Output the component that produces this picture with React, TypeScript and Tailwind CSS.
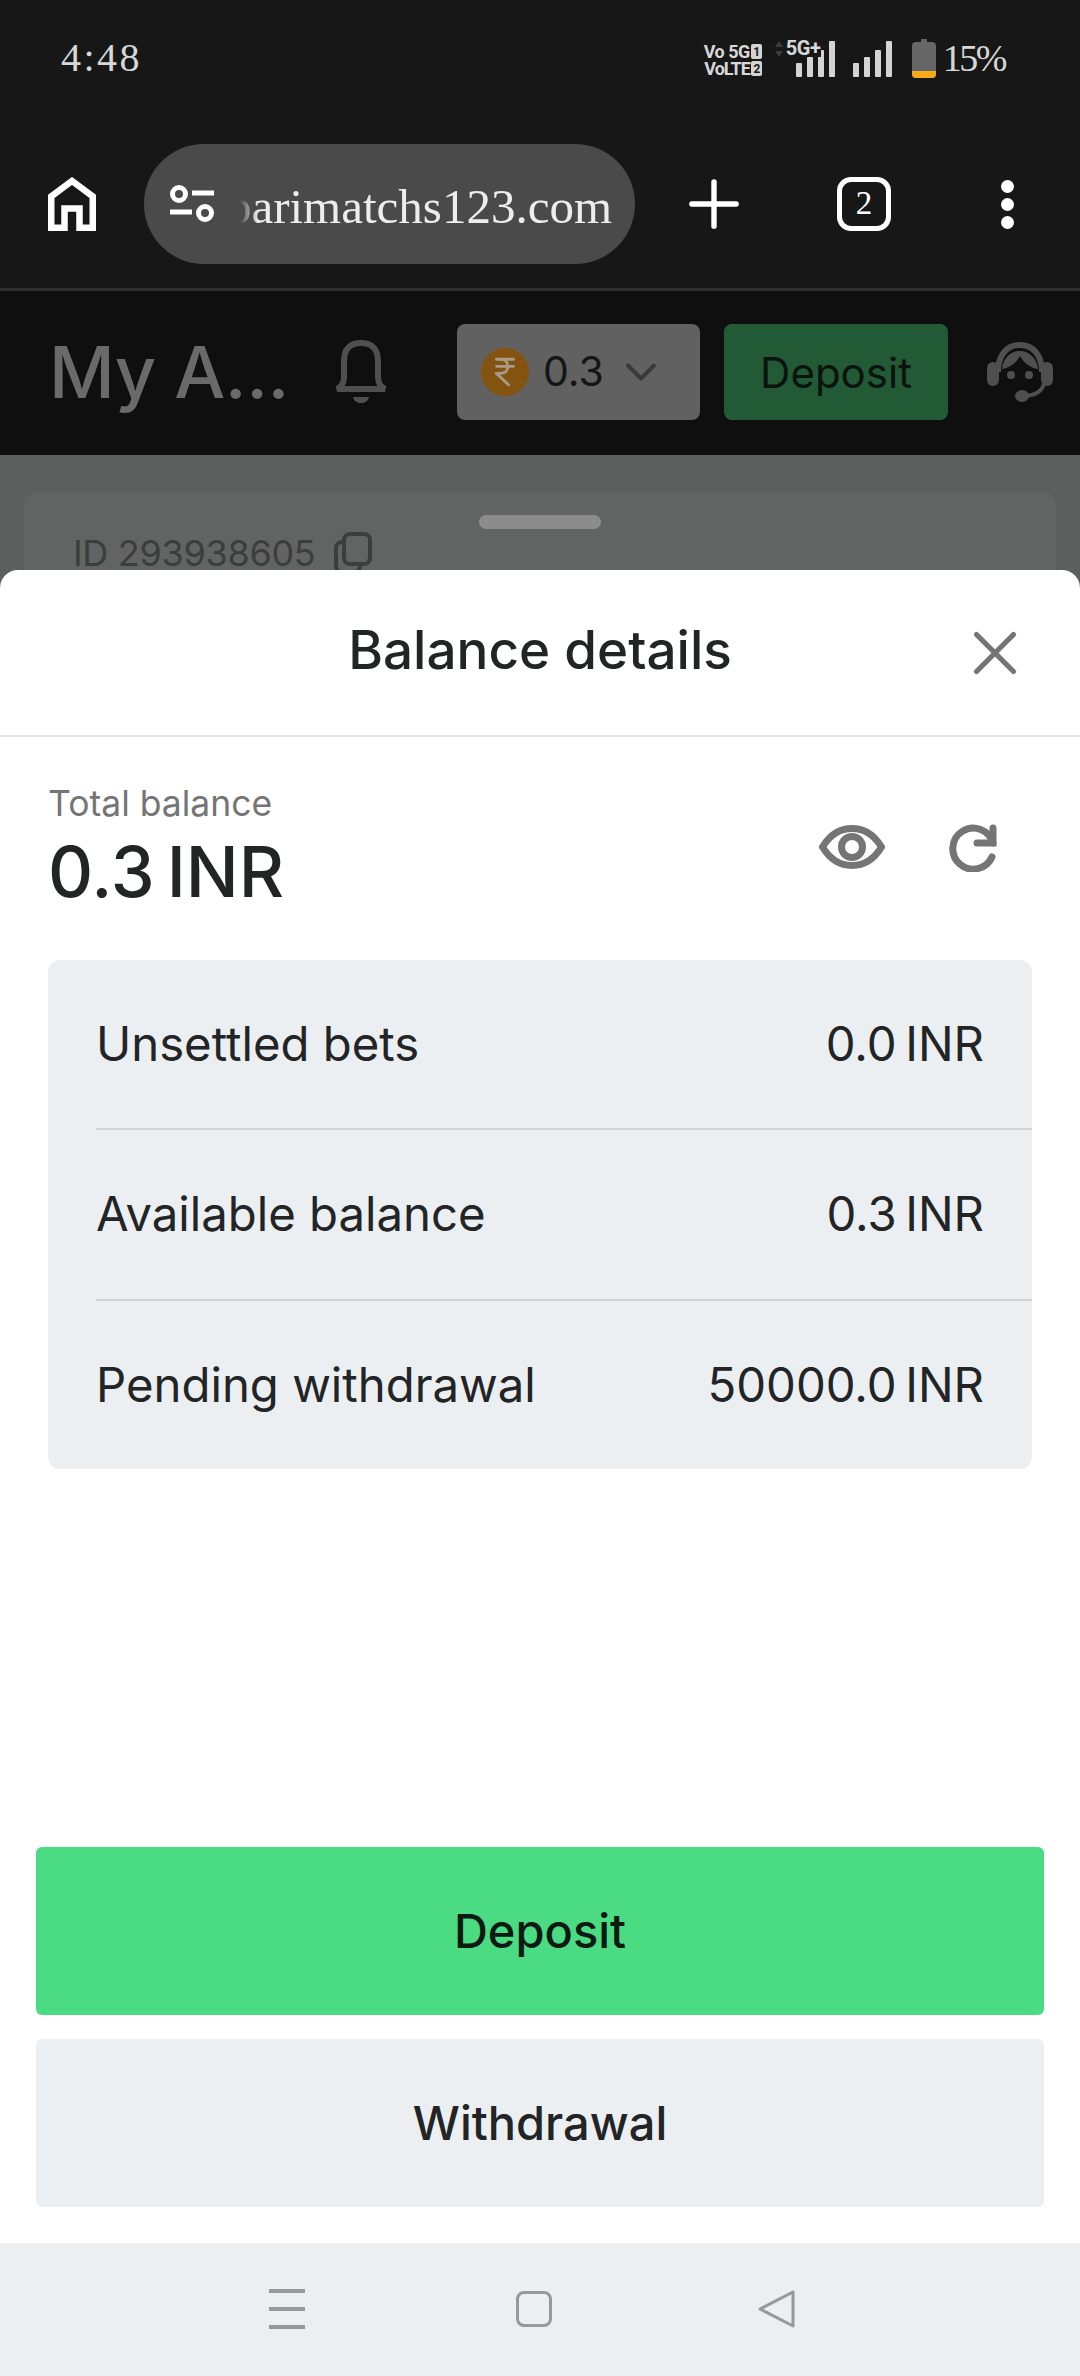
import { ChevronDown, IndianRupee, Plus, X } from 'lucide-react'

const SERIF = "[font-family:'Liberation_Serif',serif]"

function SignalBars({ className }: { className?: string }) {
  return (
    <svg viewBox="0 0 39 36" className={className} fill="#d4d4d4">
      <rect x="0" y="22" width="6" height="14" rx="1" />
      <rect x="11" y="16" width="6" height="20" rx="1" />
      <rect x="22" y="9" width="6" height="27" rx="1" />
      <rect x="33" y="0" width="6" height="36" rx="1" />
    </svg>
  )
}

function SimBadge({ n }: { n: number }) {
  return (
    <span className="ml-[1px] inline-flex h-[15px] w-[11px] shrink-0 items-center justify-center rounded-[2px] bg-[#d4d4d4] text-[12px] leading-none text-[#171717]">
      {n}
    </span>
  )
}

function StatusBar() {
  return (
    <div className={`flex h-[115px] items-start pl-[61px] pr-[75px] pt-[36px] text-[#d8d8d8] ${SERIF}`}>
      <span className="text-[40px] leading-[44px] tracking-[2.5px]">4:48</span>
      <div className="ml-auto flex items-start">
        <div className="mt-[7px] w-[58px] font-['Roboto'] text-[18px] font-bold leading-[17px]">
          <div className="flex items-center justify-end whitespace-nowrap tracking-[-0.5px]">Vo 5G<SimBadge n={1} /></div>
          <div className="flex items-center justify-end whitespace-nowrap tracking-[-1px]">VoLTE<SimBadge n={2} /></div>
        </div>
        <div className="relative ml-[34px] mt-[5px] h-[36px] w-[39px]">
          <SignalBars className="h-[36px] w-[39px]" />
          <span className="absolute -left-[10px] -top-[2px] bg-[#171717] pr-[1px] font-['Roboto'] text-[20px] font-bold leading-[18px] tracking-[-0.5px]">5G+</span>
          <svg viewBox="0 0 10 16" className="absolute -left-[22px] top-0 h-[16px] w-[10px]" fill="#3d3d3d">
            <path d="M5 0l4 6H1zM5 16l-4-6h8z" />
          </svg>
        </div>
        <SignalBars className="ml-[18px] mt-[5px] h-[36px] w-[39px]" />
        <svg viewBox="0 0 24 39" className="ml-[20px] mt-[3px] h-[39px] w-[24px]">
          <path d="M4 3h5V0h6v3h5a4 4 0 0 1 4 4v28a4 4 0 0 1-4 4H4a4 4 0 0 1-4-4V7a4 4 0 0 1 4-4z" fill="#666666" />
          <path d="M0 32h24v3a4 4 0 0 1-4 4H4a4 4 0 0 1-4-4z" fill="#f5ac18" />
        </svg>
        <span className="ml-[7px] text-[38px] leading-[44px] tracking-[-2.5px]">15%</span>
      </div>
    </div>
  )
}

function BrowserToolbar() {
  return (
    <div className="flex h-[176px] items-start border-b-[3px] border-[#2f2f2f] pt-[29px]">
      <div className="flex h-[120px] w-[144px] items-center justify-center">
        <svg viewBox="0 0 48 54" className="h-[54px] w-[48px]" fill="none" stroke="#fff" strokeWidth="6.500">
          <path d="M3.250 50.750V19.500L24 4l20.750 15.500v31.250H31.500V31.500h-15v19.250z" />
        </svg>
      </div>
      <div className="relative flex h-[120px] w-[491px] items-center overflow-hidden rounded-[60px] bg-[#4a4a4a]">
        <svg viewBox="0 0 46 38" className="ml-[25px] h-[38px] w-[46px] shrink-0" fill="none" stroke="#fff" strokeWidth="5">
          <circle cx="10" cy="9" r="6.500" />
          <circle cx="36" cy="28" r="6.500" />
          <path d="M23 8h22M1 27h22" />
        </svg>
        <span className={`absolute right-[23px] top-[35px] whitespace-nowrap text-[49px] leading-[56px] text-[#ededed] ${SERIF}`}>
          parimatchs123.com
        </span>
        <div className="absolute left-[71px] h-full w-[25px] bg-[#4a4a4a]" />
        <div className="absolute left-[96px] h-full w-[18px] bg-linear-to-r from-[#4a4a4a] to-transparent" />
      </div>
      <div className="flex h-[120px] flex-1 items-center">
        <Plus size={76} strokeWidth={1.7} color="#fff" className="ml-[41px]" />
        <div className={`ml-[85px] flex h-[54px] w-[54px] items-center justify-center rounded-[14px] border-[5px] border-white text-[33px] text-white ${SERIF}`}>
          2
        </div>
        <div className="ml-[110px] flex flex-col gap-[5px]">
          <span className="h-[13px] w-[13px] rounded-full bg-white" />
          <span className="h-[13px] w-[13px] rounded-full bg-white" />
          <span className="h-[13px] w-[13px] rounded-full bg-white" />
        </div>
      </div>
    </div>
  )
}

function BellIcon() {
  return (
    <svg viewBox="0 0 54 64" className="h-[64px] w-[54px] shrink-0" fill="none" stroke="#4f4f4f" strokeWidth="6" strokeLinecap="round">
      <path d="M3 49c4-2 7-5 7-12V21C10 9 16 3 27 3s17 6 17 18v16c0 7 3 10 7 12z" />
      <path d="M19 57h16c-1 4-4 6-8 6s-7-2-8-6z" fill="#4f4f4f" stroke="none" />
    </svg>
  )
}

function SupportIcon() {
  return (
    <svg viewBox="0 0 66 61" className="ml-[39px] h-[61px] w-[66px] shrink-0" fill="none">
      <path d="M11 30C11 13 20 3 33 3s22 10 22 27" stroke="#4f4f4f" strokeWidth="6" />
      <rect x="0" y="20" width="12" height="24" rx="6" fill="#4f4f4f" />
      <rect x="54" y="20" width="12" height="24" rx="6" fill="#4f4f4f" />
      <path d="M15 27c1-11 9-18 18-18s17 7 18 18c-8-1-14-6-18-13-4 7-10 12-18 13z" fill="#4f4f4f" />
      <circle cx="24" cy="33" r="4" fill="#4f4f4f" />
      <circle cx="42" cy="33" r="4" fill="#4f4f4f" />
      <path d="M57 42c-2 7-9 11-18 12" stroke="#4f4f4f" strokeWidth="4" />
      <ellipse cx="35" cy="54" rx="7" ry="6" fill="#4f4f4f" />
    </svg>
  )
}

function PageBehind() {
  return (
    <div className="relative h-[279px] overflow-hidden bg-[#5d5f5e] font-['Inter']">
      <div className="flex h-[164px] items-center bg-[#0f0f0f] pb-[2px] pl-[49px]">
        <span className="w-[285px] whitespace-nowrap text-[72px] font-medium leading-[80px] tracking-[-0.5px] text-[#6a6a6a]">My A...</span>
        <BellIcon />
        <div className="ml-[69px] flex h-[96px] w-[243px] items-center rounded-[8px] bg-[#606160] pl-[24px]">
          <span className="flex h-[48px] w-[48px] items-center justify-center rounded-full bg-[#84530f]">
            <IndianRupee size={34} color="#a89c88" strokeWidth={2} />
          </span>
          <span className="ml-[14px] text-[41px] text-[#141515]">0.3</span>
          <ChevronDown size={52} color="#3a3a3a" strokeWidth={1.8} className="ml-[11px]" />
        </div>
        <div className="ml-[24px] flex h-[96px] w-[224px] items-center justify-center rounded-[8px] bg-[#225a36] text-[42px] text-[#0b130e]">
          Deposit
        </div>
        <SupportIcon />
      </div>
      <div className="mx-[24px] mt-[37px] h-[120px] rounded-t-[12px] bg-[#626463] pl-[49px] pt-[40px]">
        <div className="flex items-center text-[36px] leading-[34px] tracking-[-0.3px] text-[#3c3d3d]">
          ID 293938605
          <svg viewBox="0 0 38 42" className="ml-[19px] h-[42px] w-[38px]" fill="none" stroke="#3c3d3d" strokeWidth="4">
            <rect x="10" y="2" width="26" height="30" rx="6" />
            <path d="M10 10H8a6 6 0 0 0-6 6v18a6 6 0 0 0 6 6h12a6 6 0 0 0 6-6v-2" />
          </svg>
        </div>
      </div>
      <div className="absolute left-[479px] top-[224px] h-[14px] w-[122px] rounded-full bg-[#8c8c8c]" />
    </div>
  )
}

function DetailRow({ label, value, className }: { label: string; value: string; className: string }) {
  return (
    <div className={`flex items-center pr-[48px] text-[47.300px] text-[#222425] ${className}`}>
      <span>{label}</span>
      <span className="ml-auto">{value}</span>
    </div>
  )
}

function BalanceSheet() {
  return (
    <div className="flex flex-1 flex-col rounded-t-[18px] bg-white font-['Inter'] text-[#222425]">
      <div className="relative flex h-[167px] items-center justify-center border-b-2 border-[#e3e4e5] pb-[4px]">
        <span className="text-[53px] font-medium">Balance details</span>
        <X size={74} strokeWidth={1.7} color="#757575" className="absolute right-[48px] top-[46px]" />
      </div>
      <div className="flex px-[48px] pt-[45px]">
        <div>
          <div className="text-[35.500px] leading-[44px] text-[#757575]">Total balance</div>
          <div className="mt-[4px] text-[70px] font-medium leading-[84px]">0.3&#8201;INR</div>
        </div>
        <div className="ml-auto mr-[35px] mt-[42px] flex items-start gap-[63px]">
          <svg viewBox="0 0 66 44" className="mt-[1px] h-[44px] w-[66px]" fill="none" stroke="#757575" strokeWidth="7">
            <path d="M3.500 22C12 8 22 3.500 33 3.500S54 8 62.500 22C54 36 44 40.500 33 40.500S12 36 3.500 22z" />
            <circle cx="33" cy="22" r="10.500" />
          </svg>
          <svg viewBox="0 0 49 48" className="h-[48px] w-[49px]" fill="none" stroke="#757575" strokeWidth="7" strokeLinecap="round">
            <path d="M44 33A20.500 20.500 0 1 1 45 19" />
            <path d="M45 4v15H29" />
          </svg>
        </div>
      </div>
      <div className="mx-[48px] mt-[46px] rounded-[12px] bg-[#eceff2] pl-[48px]">
        <DetailRow label="Unsettled bets" value="0.0&#8201;INR" className="h-[170px] border-b-2 border-[#cfd3d7]" />
        <DetailRow label="Available balance" value="0.3&#8201;INR" className="h-[171px] border-b-2 border-[#cfd3d7]" />
        <DetailRow label="Pending withdrawal" value="50000.0&#8201;INR" className="h-[168px]" />
      </div>
      <div className="mt-auto flex flex-col gap-[24px] px-[36px] pb-[36px]">
        <button className="h-[168px] rounded-[6px] bg-[#4bdb83] text-[47px] font-medium text-[#0c1a11]">Deposit</button>
        <button className="h-[168px] rounded-[6px] bg-[#eceff2] text-[47px] font-medium">Withdrawal</button>
      </div>
    </div>
  )
}

function NavBar() {
  return (
    <div className="flex h-[133px] items-center bg-[#eceff2] pb-[2px]">
      <div className="ml-[269px] flex w-[36px] flex-col gap-[14px]">
        <span className="h-[4px] bg-[#95999c]" />
        <span className="h-[4px] bg-[#95999c]" />
        <span className="h-[4px] bg-[#95999c]" />
      </div>
      <span className="ml-[211px] h-[36px] w-[36px] rounded-[8px] border-[3px] border-[#95999c]" />
      <svg viewBox="0 0 38 38" className="ml-[206px] h-[38px] w-[38px]" fill="none" stroke="#95999c" strokeWidth="3" strokeLinejoin="round">
        <path d="M2 19 35 2v34z" />
      </svg>
    </div>
  )
}

export default function App() {
  return (
    <div className="flex h-[2376px] w-[1080px] flex-col overflow-hidden bg-[#171717]">
      <StatusBar />
      <BrowserToolbar />
      <PageBehind />
      <div className="flex flex-1 flex-col bg-[#5d5f5e]">
        <BalanceSheet />
      </div>
      <NavBar />
    </div>
  )
}
